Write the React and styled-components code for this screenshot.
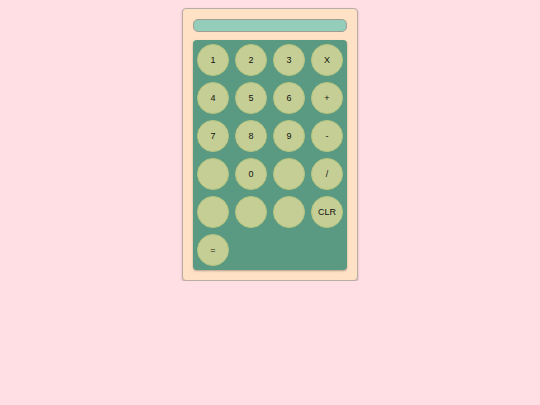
import React from 'react';
import styled, { createGlobalStyle } from 'styled-components';

const GlobalStyle = createGlobalStyle`
  body {
    margin: 0;
    background: #ffdee4;
    font-family: "Liberation Sans", Arial, sans-serif;
  }
`;

const Page = styled.div`
  display: flex;
  justify-content: center;
  padding-top: 8px;
`;

const Calculator = styled.div`
  width: 154px;
  padding: 10px 10px 10px;
  background: #ffe1c5;
  border: 1px solid #b9aca4;
  border-radius: 4px;
  box-shadow: 0 1px 2px rgba(0, 0, 0, 0.25);
  display: flex;
  flex-direction: column;
  gap: 8px;
`;

const Display = styled.div`
  height: 11px;
  background: #94cdb9;
  border: 1px solid #9e9e94;
  border-radius: 5px;
`;

const Keypad = styled.div`
  display: grid;
  grid-template-columns: repeat(4, 32px);
  grid-auto-rows: 32px;
  gap: 6px;
  padding: 4px;
  background: #5a9a83;
  border-radius: 4px;
  box-shadow: 0 1px 2px rgba(0, 0, 0, 0.3);
`;

const Key = styled.button`
  width: 32px;
  height: 32px;
  padding: 0;
  border-radius: 50%;
  border: 1px solid #b7c47f;
  background: #c5cf95;
  color: #111;
  font-family: "Liberation Sans", Arial, sans-serif;
  font-size: 9px;
  cursor: pointer;
`;

const keys = ['1', '2', '3', 'X', '4', '5', '6', '+', '7', '8', '9', '-', '', '0', '', '/', '', '', '', 'CLR', '='];

export default function App() {
  return (
    <>
      <GlobalStyle />
      <Page>
        <Calculator>
          <Display />
          <Keypad>
            {keys.map((k, i) => (
              <Key key={i}>{k}</Key>
            ))}
          </Keypad>
        </Calculator>
      </Page>
    </>
  );
}
